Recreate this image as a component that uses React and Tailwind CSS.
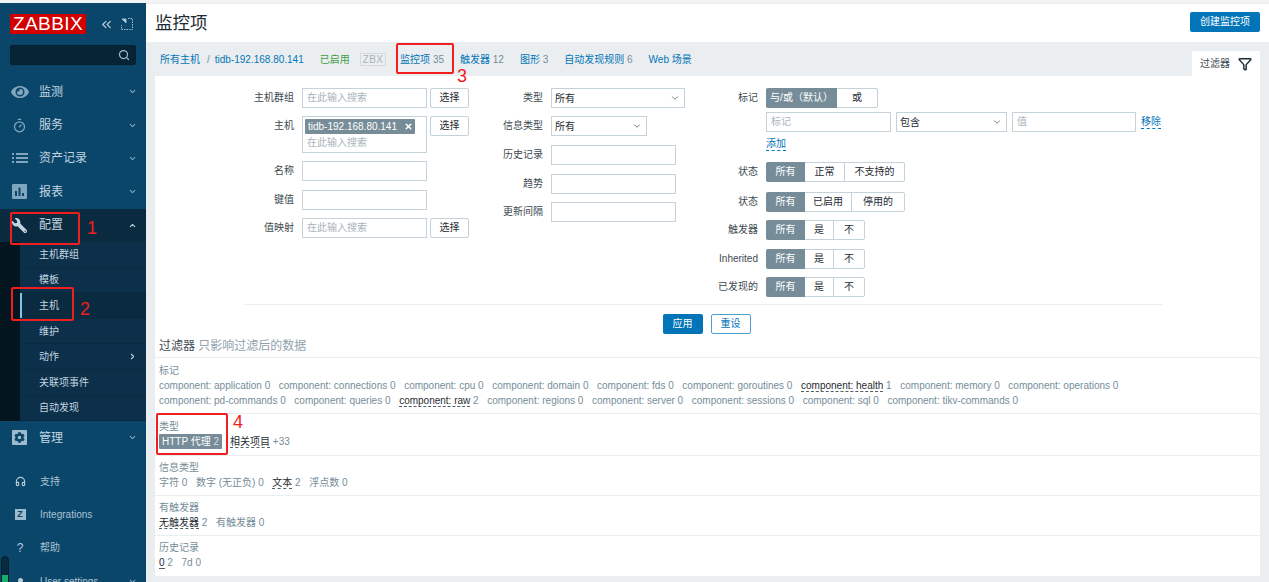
import { ChevronDown, ChevronUp, ChevronRight, ChevronsLeft, Search, Timer, Headphones, Funnel, X } from "lucide-react";
import { FaEye, FaWrench, FaCog } from "react-icons/fa";

const FONT = "font-['Liberation_Sans','Noto_Sans_CJK_SC',sans-serif]";

function ListIcon() {
  return (
    <svg width="16" height="12" viewBox="0 0 16 12" fill="#7fa6bd">
      <rect x="0" y="1" width="2" height="2" />
      <rect x="0" y="5" width="2" height="2" />
      <rect x="0" y="9" width="2" height="2" />
      <rect x="4" y="1" width="12" height="2" />
      <rect x="4" y="5" width="12" height="2" />
      <rect x="4" y="9" width="12" height="2" />
    </svg>
  );
}

function ChartIcon() {
  return (
    <svg width="15" height="15" viewBox="0 0 15 15">
      <rect width="15" height="15" rx="1" fill="#7fa6bd" />
      <rect x="3" y="7" width="2" height="5" fill="#0a466a" />
      <rect x="6.5" y="3.5" width="2" height="8.5" fill="#0a466a" />
      <rect x="10" y="9" width="2" height="3" fill="#0a466a" />
    </svg>
  );
}

function ZIcon() {
  return (
    <span className="w-[11px] h-[11px] bg-[#9dbbcd] text-[#0a466a] text-[9px] font-bold leading-[11px] text-center">Z</span>
  );
}

function NavItem({ icon, label, open, dark }) {
  return (
    <div className={`flex items-center h-[33.4px] shrink-0 ${dark ? "bg-[#0a2a3f]" : ""}`}>
      <span className="w-[39px] flex justify-center px-[1px] shrink-0">{icon}</span>
      <span className="flex-1 text-[12px] text-[#c3d5e0]">{label}</span>
      {open ? (
        <ChevronUp size={9} className="text-[#b8ccd8] mr-[9px]" strokeWidth={3} />
      ) : (
        <ChevronDown size={9} className="text-[#7fa6bd] mr-[9px]" strokeWidth={3} />
      )}
    </div>
  );
}

function SubItem({ label, active, arrow }) {
  return (
    <div className={`relative flex items-center h-[25.6px] pl-[19px] pr-[9px] border-b border-[#0a2a3f] text-[10px] text-[#c3d5e0] ${active ? "bg-[#0a2a3f]" : ""}`}>
      {active && <span className="absolute left-0 top-0 bottom-0 w-[2px] bg-[#7fc4ef]" />}
      <span className="flex-1">{label}</span>
      {arrow && <ChevronRight size={9} strokeWidth={3} className="text-[#b8ccd8]" />}
    </div>
  );
}

function FootItem({ icon, label, chevron }) {
  return (
    <div className="flex items-center h-[33.4px] shrink-0">
      <span className="w-[40px] flex justify-center shrink-0">{icon}</span>
      <span className="flex-1 text-[10px] text-[#a9c3d3]">{label}</span>
      {chevron && <ChevronDown size={9} className="text-[#7fa6bd] mr-[9px]" strokeWidth={3} />}
    </div>
  );
}

function Sidebar() {
  return (
    <aside className="relative w-[146px] shrink-0 bg-[#0a466a] flex flex-col overflow-hidden">
      <div className="flex items-center h-[20px] mt-[11px] pl-[10px] shrink-0">
        <span className="w-[76px] h-[20px] bg-[#d40000] text-white text-[19px] leading-[20px] tracking-[0.4px] text-center">ZABBIX</span>
        <ChevronsLeft size={15} className="text-[#b8ccd8] ml-[13px]" />
        <svg width="12" height="12" viewBox="0 0 12 12" className="ml-[7px]" fill="none" stroke="#9dbbcd">
          <path d="M7 .5h4.5v11H.5V7" strokeDasharray="1.5 1" />
          <path d="M1 1h4v4z" fill="#b8ccd8" />
        </svg>
      </div>
      <div className="flex items-center justify-end h-[20px] mx-[10px] mt-[11px] mb-[10px] rounded-[2px] bg-[#052436] border border-[#06202f] pr-[5px] shrink-0">
        <Search size={12} strokeWidth={2.5} className="text-[#9dbbcd]" />
      </div>
      <NavItem icon={<FaEye size={18} color="#7fa6bd" />} label="监测" />
      <NavItem icon={<Timer size={15} color="#7fa6bd" />} label="服务" />
      <NavItem icon={<ListIcon />} label="资产记录" />
      <NavItem icon={<ChartIcon />} label="报表" />
      <NavItem icon={<FaWrench size={15} color="#c3d5e0" className="-scale-x-100" />} label="配置" open dark />
      <div className="flex shrink-0">
        <div className="w-[20px] bg-[#03151f]" />
        <div className="flex-1 bg-[#0c3049]">
          <SubItem label="主机群组" />
          <SubItem label="模板" />
          <SubItem label="主机" active />
          <SubItem label="维护" />
          <SubItem label="动作" arrow />
          <SubItem label="关联项事件" />
          <SubItem label="自动发现" />
        </div>
      </div>
      <NavItem
        icon={
          <span className="w-[15px] h-[15px] rounded-[1px] bg-[#9dbbcd] flex items-center justify-center">
            <FaCog size={11} color="#0a466a" />
          </span>
        }
        label="管理"
      />
      <div className="h-[10px] shrink-0" />
      <FootItem icon={<Headphones size={11} strokeWidth={2.5} color="#b8ccd8" />} label="支持" />
      <FootItem icon={<ZIcon />} label="Integrations" />
      <FootItem icon={<span className="text-[12px] text-[#b8ccd8]">?</span>} label="帮助" />
      <FootItem icon={<span className="w-[5px] h-[5px] rounded-full bg-[#b8ccd8] mb-[1px]" />} label="User settings" chevron />
      {/* scrollbar thumb at the bottom left */}
      <div className="absolute left-[1px] top-[553px] w-[8px] h-[30px] rounded-t-[4px] border border-[#06202f] bg-[#0a2a3f] overflow-hidden">
        <div className="mt-[18px] h-[12px] bg-[#14b06a]" />
      </div>
    </aside>
  );
}

function Field({ className = "w-[125px]", placeholder }) {
  return (
    <div className={`h-[20px] border border-[#c5d2d9] bg-white px-[4px] text-[10px] leading-[18px] text-[#a9b4ba] ${className}`}>{placeholder}</div>
  );
}

function SelectBtn() {
  return (
    <div className="w-[39px] h-[20px] ml-[3px] border border-[#c5d2d9] rounded-[2px] bg-white text-[10px] leading-[18px] text-center text-[#1f2c33]">选择</div>
  );
}

function DropDown({ className, value }) {
  return (
    <div className={`flex items-center justify-between h-[20px] border border-[#c5d2d9] bg-white pl-[3px] pr-[4px] text-[10px] text-[#1f2c33] ${className}`}>
      {value}
      <ChevronDown size={10} className="text-[#4f5f68]" />
    </div>
  );
}

function Seg({ items, widths }) {
  return (
    <div className="flex h-[20px] rounded-[2px] border border-[#c5d2d9] text-[10px] leading-[18px] text-center text-[#1f2c33] bg-white">
      {items.map((t, i) => (
        <span
          key={t}
          style={{ width: widths[i] }}
          className={i === 0 ? "bg-[#768d99] text-white -my-[1px] -ml-[1px] leading-[20px] rounded-l-[2px]" : i === 1 ? "" : "border-l border-[#c5d2d9]"}
        >
          {t}
        </span>
      ))}
    </div>
  );
}

function Row({ label, w, mt, children }) {
  return (
    <div className="flex items-start" style={{ marginTop: mt }}>
      <span style={{ width: w }} className="h-[20px] leading-[20px] text-right mr-[8px] text-[10px] text-[#3d4a51] shrink-0">{label}</span>
      {children}
    </div>
  );
}

function FilterForm() {
  return (
    <div className="flex h-[228px] pt-[12px]">
      <div className="w-[340px] shrink-0">
        <Row label="主机群组" w={139} mt={0}>
          <Field placeholder="在此输入搜索" />
          <SelectBtn />
        </Row>
        <Row label="主机" w={139} mt={8}>
          <div className="w-[125px] h-[37px] border border-[#c5d2d9] p-[2px] text-[10px]">
            <div className="flex items-center justify-between w-[110px] h-[15px] bg-[#768d99] text-white pl-[3px] pr-[2px] rounded-[1px]">
              tidb-192.168.80.141
              <X size={9} strokeWidth={4} />
            </div>
            <div className="text-[#a9b4ba] pl-[2px] mt-[2px] leading-[14px]">在此输入搜索</div>
          </div>
          <SelectBtn />
        </Row>
        <Row label="名称" w={139} mt={8}>
          <Field />
        </Row>
        <Row label="键值" w={139} mt={9}>
          <Field />
        </Row>
        <Row label="值映射" w={139} mt={8}>
          <Field placeholder="在此输入搜索" />
          <SelectBtn />
        </Row>
      </div>

      <div className="w-[205px] shrink-0">
        <Row label="类型" w={48} mt={0}>
          <DropDown className="w-[134px]" value="所有" />
        </Row>
        <Row label="信息类型" w={48} mt={8}>
          <DropDown className="w-[96px]" value="所有" />
        </Row>
        <Row label="历史记录" w={48} mt={9}>
          <Field />
        </Row>
        <Row label="趋势" w={48} mt={9}>
          <Field />
        </Row>
        <Row label="更新间隔" w={48} mt={8}>
          <Field />
        </Row>
      </div>

      <div className="flex-1">
        <Row label="标记" w={58} mt={0}>
          <Seg items={["与/或（默认）", "或"]} widths={[71, 40]} />
        </Row>
        <div className="flex items-center gap-[5px] ml-[66px] mt-[4px]">
          <Field className="w-[125px]" placeholder="标记" />
          <DropDown className="w-[111px]" value="包含" />
          <Field className="w-[124px]" placeholder="值" />
          <span className="text-[10px] text-[#0275b8] border-b border-dashed border-[#0275b8] leading-[12px]">移除</span>
        </div>
        <div className="ml-[66px] mt-[4px] h-[14px]">
          <span className="inline-block text-[10px] text-[#0275b8] border-b border-dashed border-[#0275b8] leading-[13px]">添加</span>
        </div>
        <Row label="状态" w={58} mt={12}>
          <Seg items={["所有", "正常", "不支持的"]} widths={[39, 39, 60]} />
        </Row>
        <Row label="状态" w={58} mt={10}>
          <Seg items={["所有", "已启用", "停用的"]} widths={[39, 46, 53]} />
        </Row>
        <Row label="触发器" w={58} mt={8}>
          <Seg items={["所有", "是", "不"]} widths={[39, 28, 31]} />
        </Row>
        <Row label="Inherited" w={58} mt={9}>
          <Seg items={["所有", "是", "不"]} widths={[39, 28, 31]} />
        </Row>
        <Row label="已发现的" w={58} mt={8}>
          <Seg items={["所有", "是", "不"]} widths={[39, 28, 31]} />
        </Row>
      </div>
    </div>
  );
}

function Sub({ name, n, on }) {
  return (
    <span className="mr-[8.6px] text-[#768d99]">
      <span className={on ? "text-[#1f2c33] border-b border-dashed border-[#4f5f68]" : ""}>{name}</span> {n}
    </span>
  );
}

function SubSection({ title, h, low, children }) {
  return (
    <div className="border-t border-[#ebeef0] pl-[4px]" style={{ height: h }}>
      <div className={`text-[10px] leading-[15px] ${low ? "pt-[5px] h-[20px]" : "pt-[4px] h-[19px]"} text-[#768d99]`}>{title}</div>
      {children}
    </div>
  );
}

function Tab({ name, n }) {
  return (
    <span className="mr-[16px] text-[#0275b8]">
      {name} <span className="text-[#768d99]">{n}</span>
    </span>
  );
}

const TAGS_1 = [
  ["component: application", 0],
  ["component: connections", 0],
  ["component: cpu", 0],
  ["component: domain", 0],
  ["component: fds", 0],
  ["component: goroutines", 0],
  ["component: health", 1, true],
  ["component: memory", 0],
  ["component: operations", 0],
];

const TAGS_2 = [
  ["component: pd-commands", 0],
  ["component: queries", 0],
  ["component: raw", 2, true],
  ["component: regions", 0],
  ["component: server", 0],
  ["component: sessions", 0],
  ["component: sql", 0],
  ["component: tikv-commands", 0],
];

export default function App() {
  return (
    <div className={`relative h-[582px] w-full overflow-hidden bg-[#f2f3f4] pt-[3px] flex ${FONT}`}>
      <Sidebar />
      <main className="flex-1 min-w-0 flex flex-col bg-[#ebeef0]">
        {/* Header */}
        <div className="flex items-center justify-between h-[38px] mt-[1px] bg-white pl-[9px] pr-[9px] shrink-0">
          <h1 className="text-[17.5px] font-normal text-[#1f2c33]">监控项</h1>
          <div className="w-[70px] h-[20px] mb-[2px] rounded-[2px] bg-[#0275b8] text-white text-[10px] leading-[20px] text-center">创建监控项</div>
        </div>

        {/* Host nav */}
        <div className="flex items-end h-[34px] pl-[14px] pr-[9px] shrink-0 text-[10px]">
          <div className="flex items-center flex-1 h-[34px]">
            <span className="text-[#0275b8]">所有主机</span>
            <span className="ml-[7px] mr-[5px] text-[#768d99]">/</span>
            <span className="text-[#0275b8]">tidb-192.168.80.141</span>
            <span className="ml-[16px] text-[#429e47]">已启用</span>
            <span className="ml-[10px] mr-[14px] px-[2px] border border-[#d4dade] text-[#aab4ba] text-[10px] leading-[11px] tracking-[0.3px]">ZBX</span>
            <Tab name="监控项" n="35" />
            <Tab name="触发器" n="12" />
            <Tab name="图形" n="3" />
            <Tab name="自动发现规则" n="6" />
            <span className="text-[#0275b8]">Web 场景</span>
          </div>
          <div className="flex items-center justify-center gap-[8px] w-[68px] h-[25px] bg-white text-[#3d4a51]">
            过滤器
            <Funnel size={14} color="#1f2c33" strokeWidth={2.5} />
          </div>
        </div>

        {/* Filter card */}
        <section className="ml-[9px] mr-[9px] bg-white flex-1 min-h-0 mb-[6px] text-[10px]">
          <FilterForm />
          <div className="ml-[90px] mr-[98px] border-t border-[#ebeef0]" />
          <div className="flex justify-center gap-[8px] pt-[9px] h-[30px]">
            <div className="w-[40px] h-[20px] ml-[-2px] rounded-[2px] bg-[#0275b8] text-white leading-[20px] text-center">应用</div>
            <div className="w-[40px] h-[20px] rounded-[2px] border border-[#4f9fd2] text-[#0275b8] leading-[18px] text-center">重设</div>
          </div>
          <div className="pl-[4px] h-[22px] pt-[3px] text-[12px] leading-[16px] text-[#3d4a51]">
            过滤器 <span className="text-[#8fa2ad]">只影响过滤后的数据</span>
          </div>
          <SubSection title="标记" h={56} low>
            <div className="leading-[15px] h-[15px] whitespace-nowrap">
              {TAGS_1.map(([name, n, on]) => <Sub key={name} name={name} n={n} on={on} />)}
            </div>
            <div className="leading-[15px] h-[15px] whitespace-nowrap">
              {TAGS_2.map(([name, n, on]) => <Sub key={name} name={name} n={n} on={on} />)}
            </div>
          </SubSection>
          <SubSection title="类型" h={42} low>
            <div className="leading-[15px] whitespace-nowrap">
              <span className="inline-block px-[3px] mr-[8px] bg-[#768d99] text-white rounded-[1px]">HTTP 代理 <span className="text-[#d5dde2]">2</span></span>
              <span className="text-[#1f2c33] border-b border-dashed border-[#4f5f68]">相关项目</span>
              <span className="text-[#768d99]"> +33</span>
            </div>
          </SubSection>
          <SubSection title="信息类型" h={40}>
            <div className="leading-[15px] whitespace-nowrap">
              <Sub name="字符" n={0} />
              <Sub name="数字 (无正负)" n={0} />
              <Sub name="文本" n={2} on />
              <Sub name="浮点数" n={0} />
            </div>
          </SubSection>
          <SubSection title="有触发器" h={40}>
            <div className="leading-[15px] whitespace-nowrap">
              <Sub name="无触发器" n={2} on />
              <Sub name="有触发器" n={0} />
            </div>
          </SubSection>
          <SubSection title="历史记录" h={41}>
            <div className="leading-[15px] whitespace-nowrap">
              <Sub name="0" n={2} on />
              <Sub name="7d" n={0} />
            </div>
          </SubSection>
        </section>
      </main>

      {/* Red annotations drawn over the screenshot */}
      <div className="absolute left-[10px] top-[212px] w-[70px] h-[33px] border-2 border-[#f01e1e] rounded-[2px]" />
      <div className="absolute left-[87px] top-[218px] text-[18px] leading-[20px] text-[#f01e1e]">1</div>
      <div className="absolute left-[11px] top-[287px] w-[63px] h-[34px] border-2 border-[#f01e1e] rounded-[2px]" />
      <div className="absolute left-[80px] top-[299px] text-[18px] leading-[20px] text-[#f01e1e]">2</div>
      <div className="absolute left-[396px] top-[43px] w-[58px] h-[31px] border-2 border-[#f01e1e] rounded-[2px]" />
      <div className="absolute left-[457px] top-[66px] text-[18px] leading-[20px] text-[#f01e1e]">3</div>
      <div className="absolute left-[156px] top-[413px] w-[72px] h-[42px] border-2 border-[#f01e1e] rounded-[2px]" />
      <div className="absolute left-[233px] top-[412px] text-[18px] leading-[20px] text-[#f01e1e]">4</div>
    </div>
  );
}
